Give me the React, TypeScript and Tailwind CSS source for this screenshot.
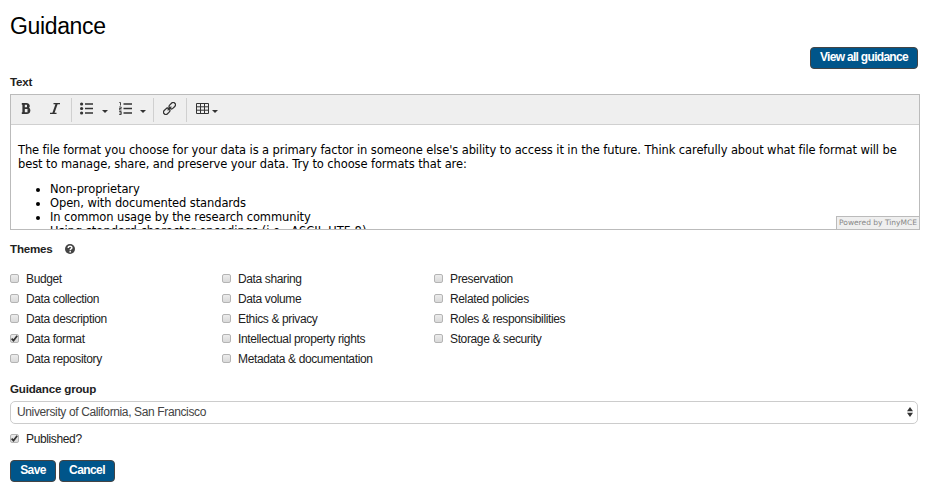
import type { ReactNode } from "react";

const columns: string[][] = [
  ["Budget", "Data collection", "Data description", "Data format", "Data repository"],
  ["Data sharing", "Data volume", "Ethics & privacy", "Intellectual property rights", "Metadata & documentation"],
  ["Preservation", "Related policies", "Roles & responsibilities", "Storage & security"],
];

function Check({ checked }: { checked?: boolean }) {
  return (
    <span className="mr-[7px] mb-[2px] flex h-[9px] w-[9px] shrink-0 items-center justify-center rounded-[2px] border border-[#b4b4b4] bg-gradient-to-b from-[#ececec] to-[#dadada] box-border">
      {checked && (
        <svg viewBox="0 0 7 7" className="h-[7px] w-[7px] shrink-0" fill="none" stroke="#333" strokeWidth="1.7">
          <path d="M0.6 3.6 2.5 5.6 6.2 0.8" />
        </svg>
      )}
    </span>
  );
}

function Caret() {
  return (
    <svg viewBox="0 0 6 3" className="h-[3px] w-[6px]" fill="#333">
      <path d="M0 0h6L3 3z" />
    </svg>
  );
}

function Button({ children, className }: { children: ReactNode; className: string }) {
  return (
    <button className={`flex h-[22px] items-center justify-center rounded-[4px] border border-[#444] bg-[#00558a] pb-[2px] text-[12px] font-bold whitespace-nowrap text-white ${className}`}>
      {children}
    </button>
  );
}

function Toolbar() {
  return (
    <div className="flex h-[30px] items-center border-b border-[#d0d0d0] bg-[#efefef] text-[#333]">
      <svg className="mb-[2px] ml-[10px] h-[11px] w-[10px]" viewBox="0 0 10 11" fill="none" stroke="#333">
        <path d="M.8.9h4.5c3.1 0 3.1 4.2 0 4.2H3h2.7c3.7 0 3.7 5 0 5H.8" strokeWidth="1.8" />
        <path d="M2.6.5v10M7.2 1.8v2.4M7.7 6.4v2.8" strokeWidth="2.4" />
      </svg>
      <svg className="mb-[2px] ml-[19px] h-[11px] w-[10px]" viewBox="0 0 10 11" fill="none" stroke="#333">
        <path d="M3.5.6H10M0 10.4h6.5" strokeWidth="1.1" />
        <path d="M6.7.6 3.3 10.4" strokeWidth="2" />
      </svg>
      <span className="ml-[11px] h-6 w-px bg-[#d0d0d0]" />
      <svg className="mb-[2px] ml-2 h-[13px] w-[13px]" viewBox="0 0 13 13" fill="#333">
        <circle cx="1.6" cy="2" r="1.6" /><circle cx="1.6" cy="6.5" r="1.6" /><circle cx="1.6" cy="11" r="1.6" />
        <path d="M5 1.2h8v1.6H5zM5 5.7h8v1.6H5zM5 10.2h8v1.6H5z" />
      </svg>
      <span className="mt-[3px] ml-[9px]"><Caret /></span>
      <svg className="mb-[2px] ml-[11px] h-[13px] w-[13px]" viewBox="0 0 13 13" fill="none" stroke="#333">
        <path d="M4.5 2H13M4.5 6.5H13M4.5 11H13" strokeWidth="1.5" />
        <path d="M.3.5h1.2v3M.2 5h2v1.5h-2V8h2.3M.2 9.5h2v3h-2M.5 11h1.7" strokeWidth=".9" />
      </svg>
      <span className="mt-[3px] ml-2"><Caret /></span>
      <span className="ml-[7px] h-6 w-px bg-[#d0d0d0]" />
      <svg className="mb-[2px] ml-[9px] h-[13px] w-[13px]" viewBox="0 0 13 13" fill="none" stroke="#333" strokeWidth="1.25">
        <rect x="5.8" y="1.4" width="7" height="4.6" rx="2.3" transform="rotate(-45 9.3 3.7)" />
        <rect x=".2" y="7" width="7" height="4.6" rx="2.3" transform="rotate(-45 3.7 9.3)" />
        <path d="m4.6 8.4 3.8-3.8" />
      </svg>
      <span className="ml-[10px] h-6 w-px bg-[#d0d0d0]" />
      <svg className="mb-[2px] ml-[9px] h-[11px] w-[13px]" viewBox="0 0 13 11" fill="none" stroke="#333">
        <path d="M.5.5h12v10H.5zM0 3.8h13M0 7.2h13M4.5 0v11M8.5 0v11" />
      </svg>
      <span className="mt-[3px] ml-[3px]"><Caret /></span>
    </div>
  );
}

export default function App() {
  return (
    <div className="h-[495px] w-[933px] overflow-hidden bg-white pl-[10px] font-['Liberation_Sans',Arial,sans-serif] text-[12px] leading-[20px] tracking-[-0.37px] text-[#222]">
      <h1 className="h-[47px] pt-[11px] text-[23px] leading-[30px] tracking-[-0.35px] text-black">Guidance</h1>
      <div className="flex w-[908px] justify-end"><Button className="w-[108px] tracking-[-0.7px]">View all guidance</Button></div>
      <div className="mt-[3px] h-[22px] text-[11.6px] font-bold tracking-[-0.2px]">Text</div>
      <div className="relative h-[136px] w-[910px] overflow-hidden border border-[#bbb]">
        <Toolbar />
        <div className="px-[7px] pt-[18px] font-['DejaVu_Sans',Verdana,sans-serif] text-[11.5px] leading-[14px] tracking-[-0.107px] text-black">
          <p className="whitespace-nowrap">The file format you choose for your data is a primary factor in someone else's ability to access it in the future. Think carefully about what file format will be</p>
          <p className="whitespace-nowrap">best to manage, share, and preserve your data. Try to choose formats that are:</p>
          <ul className="mt-[11px] list-disc pl-8">
            <li>Non-proprietary</li>
            <li>Open, with documented standards</li>
            <li>In common usage by the research community</li>
            <li className="tracking-normal">Using standard character encodings (i.e., ASCII, UTF-8)</li>
          </ul>
        </div>
        <div className="absolute right-0 bottom-0 h-[13px] w-[83px] border-t border-l border-[#bbb] bg-[#efefef] text-center font-['DejaVu_Sans',sans-serif] text-[7.5px] leading-[12px] tracking-normal whitespace-nowrap text-[#888]">Powered by TinyMCE</div>
      </div>
      <div className="mt-[9px] flex h-5 items-center text-[11.6px] font-bold tracking-[-0.2px]">
        Themes
        <svg className="ml-3 h-[10px] w-[10px]" viewBox="0 0 10 10">
          <circle cx="5" cy="5" r="5" fill="#444" />
          <path d="M3.2 4c0-2.5 3.7-2.3 3.7-.2 0 1.2-1.7 1.1-1.7 2.4M5.2 7.1v1.3" fill="none" stroke="white" strokeWidth="1.4" />
        </svg>
      </div>
      <div className="mt-[10px] flex h-[100px]">
        {columns.map((items, i) => (
          <div key={i} className="w-[212px]">
            {items.map((item) => (
              <label key={item} className="flex h-5 items-center whitespace-nowrap">
                <Check checked={item === "Data format"} />
                {item}
              </label>
            ))}
          </div>
        ))}
      </div>
      <div className="mt-[10px] h-[22px] text-[11.6px] font-bold tracking-[-0.2px]">Guidance group</div>
      <div className="flex h-[23px] w-[908px] items-center justify-between rounded-[5px] border border-[#ccc] pr-1 pb-px pl-[6px] text-[#444]">
        <span>University of California, San Francisco</span>
        <svg className="h-[10px] w-[6px]" viewBox="0 0 6 10" fill="#333"><path d="M0 4.3h6L3 0zM0 5.7h6L3 10z" /></svg>
      </div>
      <label className="mt-[5px] flex h-5 items-center"><Check checked />Published?</label>
      <div className="mt-[11px] flex gap-[3px]">
        <Button className="w-[46px] tracking-[-0.6px]">Save</Button>
        <Button className="w-[56px] tracking-[-0.6px]">Cancel</Button>
      </div>
    </div>
  );
}
